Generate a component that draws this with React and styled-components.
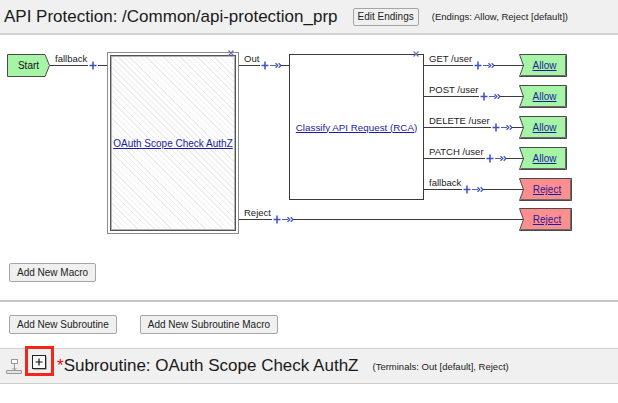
import React from 'react'
import styled, { createGlobalStyle } from 'styled-components'

const GlobalStyle = createGlobalStyle`
  body {
    margin: 0;
    background: #fff;
    font-family: "Liberation Sans", Arial, sans-serif;
    color: #1a1a1a;
  }
`

const Page = styled.div`
  width: 618px;
  height: 403px;
  overflow: hidden;
`

const Header = styled.div`
  height: 33px;
  border-bottom: 2px solid #d2d2d2;
  background: #f0f0f0;
  display: flex;
  align-items: center;
  padding-left: 4px;
`

const Title = styled.h1`
  margin: 0 15px 0 0;
  font-size: 17px;
  font-weight: normal;
  white-space: nowrap;
`

const Button = styled.button`
  height: ${p => p.$h || 19}px;
  padding: 0 ${p => p.$pad || 7}px;
  font-family: "Liberation Sans", Arial, sans-serif;
  font-size: 10px;
  color: #222;
  background: #f0f0f0;
  border: 1px solid #a6a6a6;
  border-radius: 2px;
  white-space: nowrap;
`

const Note = styled.span`
  font-size: 9.5px;
  margin-left: ${p => p.$gap || 13}px;
  color: #222;
  white-space: nowrap;
`

const Canvas = styled.div`
  position: relative;
  height: 228px;
`

const Wire = styled.div`
  position: absolute;
  display: flex;
  align-items: flex-start;
  height: 18px;
  background: linear-gradient(#3a3a3a, #3a3a3a) no-repeat 0 12px / 100% 1px;
`

const WireLabel = styled.span`
  height: 12px;
  line-height: 11px;
  font-size: 9.5px;
  padding: 0 1px 0 5px;
  color: #222;
  white-space: nowrap;
`

const Glyph = styled.svg`
  margin-top: 8px;
  flex: none;
`

const Macro = styled.div`
  position: absolute;
  box-sizing: border-box;
  border: 1px solid #8c8c8c;
  padding: 2px;
  background: #fff;
`

const Hatch = styled.div`
  box-sizing: border-box;
  height: 100%;
  border: 1px solid #555;
  box-shadow: inset 0 0 0 1px #b4b4b4;
  background: repeating-linear-gradient(45deg, #fff 0 3px, #ededed 3px 4px);
  display: flex;
  align-items: center;
  justify-content: center;
`

const Block = styled.div`
  position: absolute;
  box-sizing: border-box;
  border: 1px solid #3a3a3a;
  background: #fff;
  display: flex;
  align-items: center;
  justify-content: center;
`

const Link = styled.a`
  color: #1d1da0;
  text-decoration: underline;
  font-size: ${p => p.$size || 10}px;
  white-space: nowrap;
  cursor: pointer;
`

const Close = styled.svg`
  position: absolute;
`

const Terminal = styled.div`
  position: absolute;
  height: 23px;
  display: flex;
  align-items: center;
  justify-content: center;
  padding-left: ${p => p.$padLeft || 0}px;
  box-sizing: border-box;
  font-size: 10px;
`

const Shape = styled.svg`
  position: absolute;
  left: 0;
  top: 0;
`

const TerminalText = styled.span`
  position: relative;
  color: #111;
`

const MacroRow = styled.div`
  height: 37px;
  padding-left: 9px;
  box-sizing: border-box;
  display: flex;
  align-items: flex-start;
`

const Divider = styled.hr`
  margin: 0;
  border: 0;
  height: 2px;
  background: #c6c6c6;
`

const SubRow = styled.div`
  display: flex;
  gap: 23px;
  padding: 13px 0 14px 9px;
`

const SubBar = styled.div`
  height: 34px;
  border-top: 1px solid #cfcfcf;
  border-bottom: 1px solid #cfcfcf;
  background: #f0f0f0;
  display: flex;
  align-items: center;
  padding-left: 6px;
`

const RedBox = styled.span`
  align-self: flex-start;
  margin: -3px 0 0 3px;
  width: 29px;
  height: 30px;
  box-sizing: border-box;
  border: 3px solid #f3261b;
  display: flex;
  align-items: center;
  justify-content: center;
  padding-top: 3px;
`

const Star = styled.span`
  color: #f00;
  font-size: 17px;
  margin-left: 3px;
`

const SubTitle = styled.span`
  font-size: 17px;
  white-space: nowrap;
`

const BLUE = '#3d4fc4'
const TOP = 35

const Plus = () => (
  <Glyph width="10" height="9">
    <rect width="10" height="9" fill="#fff" />
    <path d="M5 0.5V8.5M1.5 4.5H8.5" stroke={BLUE} strokeWidth="1.5" />
  </Glyph>
)

const Chevrons = () => (
  <Glyph width="14" height="9">
    <rect width="14" height="9" fill="#fff" />
    <path d="M0 4.5H6" stroke="#5a5f9a" strokeWidth="1" />
    <path d="M5.5 2.3L7.8 4.5L5.5 6.7M8.7 2.3L11 4.5L8.7 6.7" stroke={BLUE} strokeWidth="1.2" fill="none" />
    <path d="M11 4.5H14" stroke="#3a3a3a" strokeWidth="1" />
  </Glyph>
)

const Connector = ({ x, y, to, label, arrow = true }) => (
  <Wire style={{ left: x, top: y - TOP - 12, width: to - x }}>
    <WireLabel>{label}</WireLabel>
    <Plus />
    {arrow && <Chevrons />}
  </Wire>
)

const CloseMark = ({ x, y }) => (
  <Close width="6" height="6" style={{ left: x - 3, top: y - TOP - 3 }}>
    <path d="M0.5 0.5L5.5 5.5M5.5 0.5L0.5 5.5" stroke="#6c70b8" strokeWidth="1.2" />
  </Close>
)

const Ending = ({ y, kind }) => {
  const w = kind === 'Allow' ? 48 : 53
  const fill = kind === 'Allow' ? '#a6f4a6' : '#ff8f8f'
  return (
    <Terminal $padLeft={3} style={{ left: 519, top: y - TOP, width: w }}>
      <Shape width={w} height="23">
        <path d={`M0.5 0.5H${w - 0.5}V22.5H0.5L4.5 11.5Z`} fill={fill} stroke="#4a4a4a" />
        <path d={`M${w - 1.5} 1.5V21.5H2`} stroke="#6a6a6a" fill="none" />
      </Shape>
      <Link style={{ position: 'relative' }}>{kind}</Link>
    </Terminal>
  )
}

const StartNode = () => (
  <Terminal style={{ left: 7, top: 54 - TOP, width: 43 }} $padLeft={0}>
    <Shape width="43" height="23">
      <path d="M0.5 0.5H38L42.5 11.5L38 22.5H0.5Z" fill="#a6f4a6" stroke="#4a4a4a" />
    </Shape>
    <TerminalText>Start</TerminalText>
  </Terminal>
)

const InsertIcon = () => (
  <svg width="16" height="17" viewBox="0 0 16 17">
    <rect x="5.5" y="1.5" width="6" height="4" fill="#fff" stroke="#9a9a9a" />
    <path d="M8.5 5.5V12M6.5 10L8.5 12L10.5 10" stroke="#9a9a9a" fill="none" />
    <path d="M0.5 12.5H15.5V15.5H0.5Z" fill="#e4e4e4" stroke="#9a9a9a" />
  </svg>
)

const ExpandIcon = () => (
  <svg width="15" height="15" viewBox="0 0 15 15">
    <rect x="0.5" y="0.5" width="13" height="13" fill="#fafafa" stroke="#222" />
    <path d="M14.5 1.5V14.5H1.5" stroke="#b0b0b0" fill="none" />
    <path d="M7 3.5V10.5M3.5 7H10.5" stroke="#111" strokeWidth="1.2" />
  </svg>
)

const branches = [
  { y: 65, label: 'GET /user', kind: 'Allow' },
  { y: 96, label: 'POST /user', kind: 'Allow' },
  { y: 127, label: 'DELETE /user', kind: 'Allow' },
  { y: 158, label: 'PATCH /user', kind: 'Allow' },
  { y: 189, label: 'fallback', kind: 'Reject' },
]

export default function App() {
  return (
    <Page>
      <GlobalStyle />
      <Header>
        <Title>API Protection: /Common/api-protection_prp</Title>
        <Button $h={18} $pad={4}>Edit Endings</Button>
        <Note>(Endings: Allow, Reject [default])</Note>
      </Header>

      <Canvas>
        <Connector x={50} y={65} to={107} label="fallback" arrow={false} />
        <Connector x={239} y={65} to={290} label="Out" />
        <Connector x={239} y={219} to={524} label="Reject" />
        {branches.map(b => (
          <Connector key={b.label} x={424} y={b.y} to={524} label={b.label} />
        ))}

        <StartNode />

        <Macro style={{ left: 107, top: 52 - TOP, width: 132, height: 182 }}>
          <Hatch>
            <Link $size={10}>OAuth Scope Check AuthZ</Link>
          </Hatch>
        </Macro>
        <CloseMark x={231} y={53} />

        <Block style={{ left: 289, top: 54 - TOP, width: 135, height: 146 }}>
          <Link $size={9.8}>Classify API Request (RCA)</Link>
        </Block>
        <CloseMark x={416} y={54} />

        {branches.map(b => (
          <Ending key={b.label} y={b.y - 11} kind={b.kind} />
        ))}
        <Ending y={208} kind="Reject" />
      </Canvas>

      <MacroRow>
        <Button>Add New Macro</Button>
      </MacroRow>
      <Divider />
      <SubRow>
        <Button>Add New Subroutine</Button>
        <Button>Add New Subroutine Macro</Button>
      </SubRow>
      <SubBar>
        <InsertIcon />
        <RedBox>
          <ExpandIcon />
        </RedBox>
        <Star>*</Star>
        <SubTitle>Subroutine: OAuth Scope Check AuthZ</SubTitle>
        <Note $gap={14}>(Terminals: Out [default], Reject)</Note>
      </SubBar>
    </Page>
  )
}
